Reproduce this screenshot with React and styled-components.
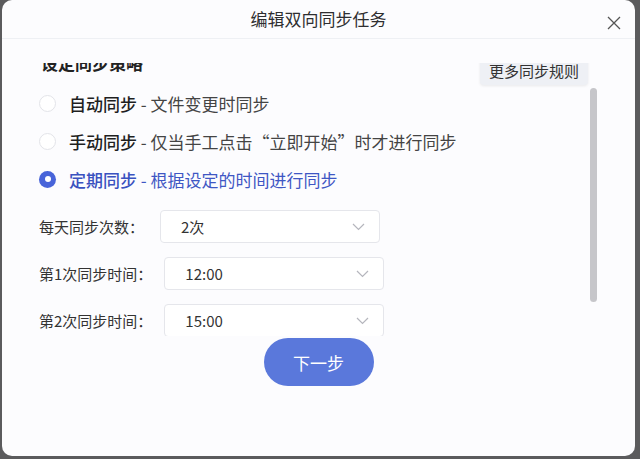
import React from "react";
import styled, { createGlobalStyle, css } from "styled-components";

const GlobalStyle = createGlobalStyle`
  html, body {
    margin: 0;
    padding: 0;
    background: #5b5b5d;
    font-family: "Noto Sans CJK SC", "Noto Sans", sans-serif;
  }
`;

const Page = styled.div`
  width: 640px;
  height: 459px;
  padding-left: 2px;
  box-sizing: border-box;
  overflow: hidden;
`;

const Dialog = styled.div`
  width: 633px;
  height: 456px;
  background: #fcfcfe;
  border-radius: 10px;
  display: flex;
  flex-direction: column;
  overflow: hidden;
`;

const Header = styled.div`
  height: 39px;
  flex-shrink: 0;
  display: grid;
  grid-template-columns: 1fr auto 1fr;
  align-items: center;
  border-bottom: 1px solid #eef0f4;
  box-sizing: border-box;
`;

const Title = styled.div`
  grid-column: 2;
  font-size: 17px;
  color: #2e2e30;
  line-height: 1;
  margin-top: -2px;
`;

const CloseButton = styled.div`
  grid-column: 3;
  justify-self: end;
  margin-right: 14px;
  margin-top: 7px;
  width: 14px;
  height: 14px;
  display: flex;
  color: #555;
`;

const Body = styled.div`
  padding-top: 24px;
  display: flex;
  height: 273px;
  flex-shrink: 0;
`;

const ScrollView = styled.div`
  flex: 1;
  overflow: hidden;
  padding-left: 35px;
  padding-right: 2px;
`;

const ScrollContent = styled.div`
  margin-top: -10px;
`;

const ScrollTrack = styled.div`
  width: 7px;
  margin-right: 38px;
  padding-top: 25px;
`;

const ScrollThumb = styled.div`
  height: 214px;
  border-radius: 4px;
  background: #c6c6ca;
`;

const SectionRow = styled.div`
  height: 31px;
  display: flex;
  justify-content: space-between;
  align-items: flex-start;
`;

const SectionTitle = styled.div`
  font-size: 17px;
  font-weight: 700;
  line-height: 24px;
  margin-top: -2px;
  color: #222;
  padding-left: 4px;
`;

const MoreButton = styled.div`
  margin-top: 2px;
  height: 30px;
  width: 108px;
  border-radius: 4px;
  background: #eef0f5;
  box-shadow: 0 1px 3px rgba(0, 0, 0, 0.08);
  font-size: 15px;
  color: #333;
  display: flex;
  align-items: center;
  justify-content: center;
`;

const RadioRow = styled.div`
  height: 38px;
  display: flex;
  align-items: center;
  gap: 13px;
  font-size: 17px;
  color: ${({ checked }) => (checked ? "#3f57c4" : "#444")};
`;

const RadioDot = styled.span`
  width: 17px;
  height: 17px;
  margin-left: 2px;
  border-radius: 50%;
  box-sizing: border-box;
  display: flex;
  align-items: center;
  justify-content: center;
  ${({ checked }) =>
    checked
      ? css`
          background: #4864d9;
          &::after {
            content: "";
            width: 6px;
            height: 6px;
            border-radius: 50%;
            background: #fff;
          }
        `
      : css`
          background: #fff;
          border: 1px solid #e3e4e9;
        `}
`;

const RadioName = styled.span`
  font-weight: 500;
  color: ${({ checked }) => (checked ? "#3a52c0" : "#1f1f1f")};
`;

const Form = styled.div`
  margin-top: 12px;
  display: flex;
  flex-direction: column;
  gap: 14px;
`;

const FormRow = styled.div`
  display: flex;
  align-items: center;
  gap: ${({ gap }) => gap}px;
`;

const Label = styled.span`
  font-size: 15px;
  color: #333;
  padding-left: 2px;
`;

const Select = styled.div`
  width: 220px;
  height: 33px;
  box-sizing: border-box;
  border: 1px solid #e5e6eb;
  border-radius: 4px;
  background: #fff;
  display: flex;
  align-items: center;
  justify-content: space-between;
  padding: 0 14px 0 20px;
  font-size: 15px;
  color: #333;
`;

const Chevron = styled.svg`
  width: 13px;
  height: 8px;
  color: #b5b6bd;
`;

const Footer = styled.div`
  display: flex;
  justify-content: center;
  padding-top: 2px;
`;

const NextButton = styled.div`
  width: 110px;
  height: 48px;
  border-radius: 24px;
  background: #5a78db;
  color: #fff;
  font-size: 17px;
  display: flex;
  align-items: center;
  justify-content: center;
`;

const modes = [
  { name: "自动同步", desc: "文件变更时同步" },
  { name: "手动同步", desc: "仅当手工点击“立即开始”时才进行同步" },
  { name: "定期同步", desc: "根据设定的时间进行同步", checked: true },
];

const fields = [
  { label: "每天同步次数：", value: "2次", gap: 16 },
  { label: "第1次同步时间：", value: "12:00", gap: 12 },
  { label: "第2次同步时间：", value: "15:00", gap: 12 },
];

const ChevronIcon = () => (
  <Chevron viewBox="0 0 13 8" fill="none">
    <path d="M1 1l5.5 5.5L12 1" stroke="currentColor" strokeWidth="1.2" />
  </Chevron>
);

export default function App() {
  return (
    <Page>
      <GlobalStyle />
      <Dialog>
        <Header>
          <Title>编辑双向同步任务</Title>
          <CloseButton>
            <svg viewBox="0 0 14 14" width="14" height="14" fill="none">
              <path d="M1 1l12 12M13 1L1 13" stroke="currentColor" strokeWidth="1.3" />
            </svg>
          </CloseButton>
        </Header>
        <Body>
          <ScrollView>
            <ScrollContent>
              <SectionRow>
                <SectionTitle>设定同步策略</SectionTitle>
                <MoreButton>更多同步规则</MoreButton>
              </SectionRow>
              {modes.map((m) => (
                <RadioRow key={m.name} checked={m.checked}>
                  <RadioDot checked={m.checked} />
                  <span>
                    <RadioName checked={m.checked}>{m.name}</RadioName>
                    {" - "}
                    {m.desc}
                  </span>
                </RadioRow>
              ))}
              <Form>
                {fields.map((f) => (
                  <FormRow key={f.label} gap={f.gap}>
                    <Label>{f.label}</Label>
                    <Select>
                      <span>{f.value}</span>
                      <ChevronIcon />
                    </Select>
                  </FormRow>
                ))}
              </Form>
            </ScrollContent>
          </ScrollView>
          <ScrollTrack>
            <ScrollThumb />
          </ScrollTrack>
        </Body>
        <Footer>
          <NextButton>下一步</NextButton>
        </Footer>
      </Dialog>
    </Page>
  );
}
